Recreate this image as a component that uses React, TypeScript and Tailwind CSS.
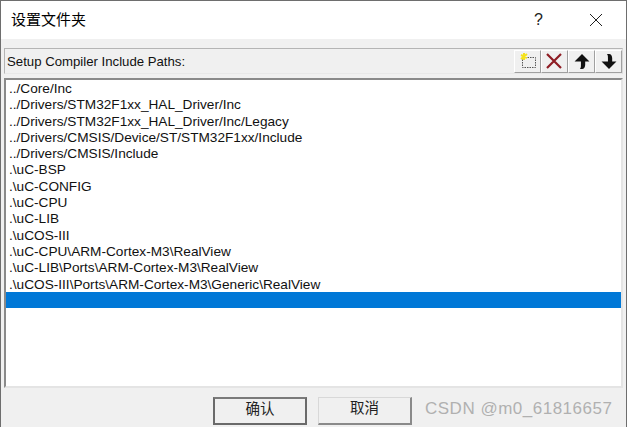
import React from 'react';

const paths = [
  '../Core/Inc',
  '../Drivers/STM32F1xx_HAL_Driver/Inc',
  '../Drivers/STM32F1xx_HAL_Driver/Inc/Legacy',
  '../Drivers/CMSIS/Device/ST/STM32F1xx/Include',
  '../Drivers/CMSIS/Include',
  '.\\uC-BSP',
  '.\\uC-CONFIG',
  '.\\uC-CPU',
  '.\\uC-LIB',
  '.\\uCOS-III',
  '.\\uC-CPU\\ARM-Cortex-M3\\RealView',
  '.\\uC-LIB\\Ports\\ARM-Cortex-M3\\RealView',
  '.\\uCOS-III\\Ports\\ARM-Cortex-M3\\Generic\\RealView',
];

function ToolButton({ children }: { children: React.ReactNode }) {
  return (
    <div className="flex h-[23px] w-[27px] items-center justify-center border border-t-white border-l-white border-r-[#a0a0a0] border-b-[#a0a0a0] bg-[#f0f0f0]">
      {children}
    </div>
  );
}

export default function App() {
  return (
    <div className="flex h-[427px] w-[627px] flex-col overflow-hidden border-x border-t border-x-[#6e6e6e] border-t-[#6e6e6e] bg-[#f0f0f0] font-['Liberation_Sans','Noto_Sans_CJK_SC',sans-serif] text-[13.65px] text-[#111]">
      {/* title bar */}
      <div className="flex h-[38px] shrink-0 items-center bg-white pl-[10px]">
        <span className="flex-1 text-[15px] text-black">设置文件夹</span>
        <span className="mr-[46px] text-[16px] text-[#222]">?</span>
        <svg width="14" height="14" viewBox="0 0 14 14" className="mr-[23px]" fill="none" stroke="#222" strokeWidth="1">
          <path d="M1 1 L13 13 M13 1 L1 13" />
        </svg>
      </div>

      {/* header */}
      <div className="mx-[3px] mt-[9px] flex h-[26px] shrink-0 items-center justify-between border border-[#b4b4b4] border-r-[#d8d8d8] border-b-[#e8e8e8] pl-[2px]">
        <span className="pt-[1px] text-[13.2px]">Setup Compiler Include Paths:</span>
        <div className="flex">
          <ToolButton>
            <svg width="20" height="18" viewBox="0 0 20 18" fill="none">
              <rect x="4.5" y="5.5" width="13" height="10" stroke="#555" strokeDasharray="1.5 1" />
              <path d="M3 3 L9 6 M6 1 L6 8 M3 7 L9 2" stroke="#f4e21c" strokeWidth="2" />
            </svg>
          </ToolButton>
          <ToolButton>
            <svg width="18" height="16" viewBox="0 0 18 16" fill="none" stroke="#8f1d24" strokeWidth="2.2" className="mr-[2px]">
              <path d="M2 1 L16 15 M16 1 L2 15" />
            </svg>
          </ToolButton>
          <ToolButton>
            <svg width="18" height="17" viewBox="0 0 16 16" fill="#111">
              <path d="M8 1 L15 8 L11 8 L11 11 C11 13 10 15 8 15 L6 15 C7 14 7 13 7 11 L7 8 L1 8 Z" />
            </svg>
          </ToolButton>
          <ToolButton>
            <svg width="18" height="17" viewBox="0 0 16 16" fill="#111">
              <path d="M8 15 L15 8 L11 8 L11 5 C11 3 10 1 8 1 L6 1 C7 2 7 3 7 5 L7 8 L1 8 Z" />
            </svg>
          </ToolButton>
        </div>
      </div>

      {/* list */}
      <div className="mx-[3px] mt-[4px] h-[310px] shrink-0 border-2 border-t-[#8a8a8a] border-l-[#8a8a8a] border-r-[#e4e4e4] border-b-[#e4e4e4] bg-white">
        {paths.map((p) => (
          <div key={p} className="h-[16.3px] pl-[3px] leading-[17px] whitespace-nowrap">
            {p}
          </div>
        ))}
        <div className="h-[16px] bg-[#0078d7]" />
      </div>

      {/* footer */}
      <div className="flex flex-1 items-start pl-[212px] pt-[9px]">
        <button className="h-[28px] w-[94px] border-2 border-[#6a6a6a] border-t-[#7a7a7a] bg-[#f0f0f0] pb-[3px] text-[14.5px] text-[#222]">
          确认
        </button>
        <button className="ml-[11px] h-[28px] w-[94px] border border-t-[#d8d8d8] border-l-[#d8d8d8] border-r-2 border-b-2 border-r-[#8a8a8a] border-b-[#8a8a8a] bg-[#f0f0f0] pb-[3px] text-[14.5px] text-[#222]">
          取消
        </button>
        <span className="ml-[13px] text-[17px] leading-[24px] tracking-[0.5px] whitespace-nowrap text-[#b0b0b0]">CSDN @m0_61816657</span>
      </div>
    </div>
  );
}
